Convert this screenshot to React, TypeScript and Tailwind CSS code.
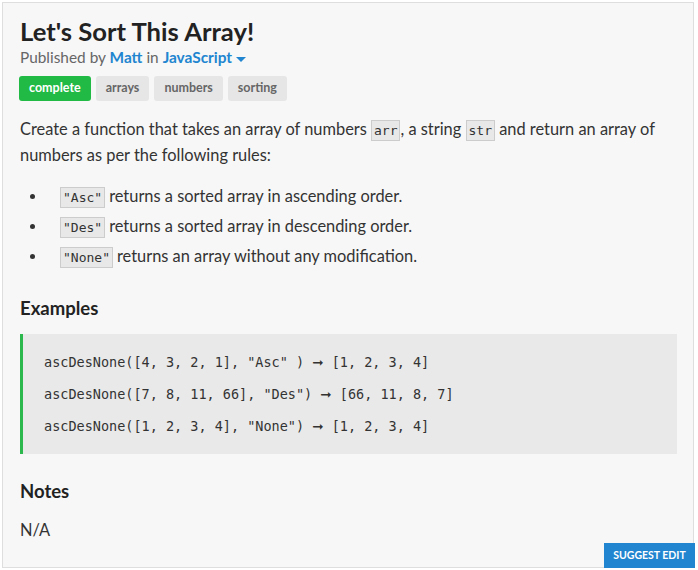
export default function App() {
  const tags = ["arrays", "numbers", "sorting"];
  const rules = [
    { code: '"Asc"', text: "returns a sorted array in ascending order." },
    { code: '"Des"', text: "returns a sorted array in descending order." },
    { code: '"None"', text: "returns an array without any modification." },
  ];
  const examples = [
    { call: 'ascDesNone([4, 3, 2, 1], "Asc" )', out: "[1, 2, 3, 4]" },
    { call: 'ascDesNone([7, 8, 11, 66], "Des")', out: "[66, 11, 8, 7]" },
    { call: 'ascDesNone([1, 2, 3, 4], "None")', out: "[1, 2, 3, 4]" },
  ];

  const code =
    "border border-[#ccc] bg-[#e8e8e8] px-[2px] py-[2px] font-['DejaVu_Sans_Mono',monospace] text-[13px] leading-none text-[#333]";

  return (
    <div className="w-[698px] h-[570px] bg-white p-[2px] font-['Lato',sans-serif]">
      <div className="relative h-[566px] w-[692px] border border-[#dedede] bg-[#f7f7f7] pl-[17px] pr-[16px] pt-[12px] text-[#333]">
        <h1 className="text-[25.6px] font-bold leading-[32px] text-[#222]">Let's Sort This Array!</h1>
        <div className="flex h-[22px] items-center text-[15.4px] text-[#666]">
          <span>
            Published by <span className="font-bold text-[#2185d0]">Matt</span> in{" "}
            <span className="font-bold text-[#2185d0]">JavaScript</span>
          </span>
          <span className="ml-[4px] mt-[2px] border-x-[5px] border-t-[5px] border-x-transparent border-t-[#2185d0]" />
        </div>
        <div className="mt-[7px] flex gap-[5px] -ml-[1px]">
          <span className="flex h-[25px] items-center rounded-[3px] bg-[#21ba45] px-[10px] text-[12.5px] font-bold text-white">
            complete
          </span>
          {tags.map((t) => (
            <span
              key={t}
              className="flex h-[25px] items-center rounded-[3px] bg-[#e6e6e6] px-[10px] text-[12.5px] font-bold text-[#666]"
            >
              {t}
            </span>
          ))}
        </div>

        <p className="mt-[15px] text-[16.4px] leading-[26px]">
          Create a function that takes an array of numbers <code className={code}>arr</code>, a string{" "}
          <code className={code}>str</code> and return an array of numbers as per the following rules:
        </p>

        <ul className="mt-[15px] flex flex-col gap-[4px] pl-[10px] text-[16.4px] leading-[26px]">
          {rules.map((r) => (
            <li key={r.code} className="flex items-center">
              <span className="mr-[25px] h-[5px] w-[5px] shrink-0 rounded-full bg-[#333]" />
              <span>
                <code className={code + " mr-[4px]"}>{r.code}</code>
                {r.text}
              </span>
            </li>
          ))}
        </ul>

        <h2 className="mt-[26px] text-[18.5px] font-bold leading-[26px] text-[#222]">Examples</h2>
        <div className="mt-[13px] flex h-[120px] flex-col justify-center gap-[12px] border-l-[3px] border-[#2db84d] bg-[#e9e9e9] pl-[21px] font-['DejaVu_Sans_Mono',monospace] text-[13.5px] leading-[20px] text-[#333]">
          {examples.map((e) => (
            <div key={e.call} className="whitespace-pre">
              {e.call} <span className="font-['DejaVu_Sans',sans-serif] font-bold">➞</span> {e.out}
            </div>
          ))}
        </div>

        <h2 className="mt-[24px] text-[18.5px] font-bold leading-[26px] text-[#222]">Notes</h2>
        <p className="mt-[13px] text-[16.4px] leading-[26px]">N/A</p>

        <button className="absolute bottom-[-1px] right-[-2px] h-[25px] w-[91px] bg-[#2185d0] text-[10.5px] font-bold text-white">
          SUGGEST EDIT
        </button>
      </div>
    </div>
  );
}
